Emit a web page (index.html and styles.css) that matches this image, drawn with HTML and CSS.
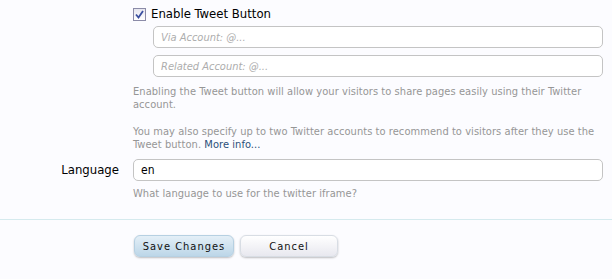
FILE: index.html
```html
<!DOCTYPE html>
<html>
<head>
<meta charset="utf-8">
<link rel="stylesheet" href="styles.css">
</head>
<body>
<form class="form">
  <div class="row">
    <div class="label"></div>
    <div class="ctrl">
      <label class="check"><span class="box"><svg width="9" height="9" viewBox="0 0 9 9"><path d="M1 4.5 L3.5 7.5 L8 1" fill="none" stroke="#3a4fa0" stroke-width="1.8"/></svg></span>Enable Tweet Button</label>
      <div class="sub">
        <input class="text" type="text" placeholder="Via Account: @...">
        <input class="text" type="text" placeholder="Related Account: @...">
      </div>
      <p class="explain first">Enabling the Tweet button will allow your visitors to share pages easily using their Twitter account.</p>
      <p class="explain">You may also specify up to two Twitter accounts to recommend to visitors after they use the Tweet button. <a href="#" class="link">More info...</a></p>
    </div>
  </div>
  <div class="row lang">
    <div class="label"><span class="ltext">Language</span></div>
    <div class="ctrl">
      <input class="text full" type="text" value="en">
      <p class="explain hint">What language to use for the twitter iframe?</p>
    </div>
  </div>
  <div class="sep"></div>
  <div class="buttons">
    <button type="button" class="btn primary">Save Changes</button>
    <button type="button" class="btn">Cancel</button>
  </div>
</form>
</body>
</html>
```
FILE: styles.css
```css
html, body {
  margin: 0;
  padding: 0;
  background: #fcfcff;
}
body {
  font-family: "DejaVu Sans Condensed", "DejaVu Sans", sans-serif;
  font-size: 11px;
  color: #000;
  width: 612px;
  height: 279px;
  overflow: hidden;
}
.form {
  padding-top: 7px;
}
.row {
  display: flex;
}
.label {
  width: 133px;
  flex: none;
  box-sizing: border-box;
  padding-right: 14px;
  text-align: right;
}
.ctrl {
  width: 470px;
}
.check {
  display: flex;
  align-items: center;
  font-size: 13px;
  height: 14px;
  line-height: 14px;
}
.box {
  width: 11px;
  height: 11px;
  border: 1px solid #8b8ba8;
  background: linear-gradient(#e6e6ef, #fff);
  margin-right: 5px;
  display: flex;
  align-items: center;
  justify-content: center;
}
.sub {
  display: flex;
  flex-direction: column;
  gap: 7px;
  margin-top: 5px;
  padding-left: 20px;
}
.text {
  display: block;
  box-sizing: border-box;
  width: 450px;
  height: 22px;
  border: 1px solid #c4c4c4;
  border-radius: 5px;
  background: #fff;
  padding: 0 7px;
  font-family: "DejaVu Sans Condensed", "DejaVu Sans", sans-serif;
  font-size: 11px;
  color: #000;
  outline: none;
}
.text::placeholder {
  color: #adadad;
  font-style: italic;
}
.text.full {
  width: 470px;
  font-size: 12px;
}
.explain {
  margin: 14px 0 0;
  color: #969696;
  line-height: 13px;
  font-size: 11px;
  letter-spacing: 0.06px;
}
.explain.first {
  margin-top: 8px;
}
.link {
  color: #2b4f7a;
  text-decoration: none;
}
.lang {
  margin-top: 8px;
}
.lang .label {
  font-size: 13px;
  line-height: 22px;
}
.hint {
  margin-top: 6px;
}
.sep {
  margin-top: 19px;
  height: 1px;
  background: #d5eaee;
}
.buttons {
  display: flex;
  gap: 6px;
  padding: 15px 0 0 134px;
}
.btn {
  height: 22px;
  width: 98px;
  border: 1px solid #d8dde4;
  border-radius: 6px;
  background: linear-gradient(#ffffff, #e8e8ef);
  box-shadow: 0 1px 2px rgba(0,0,0,0.25);
  font-family: "DejaVu Sans Condensed", "DejaVu Sans", sans-serif;
  font-size: 11px;
  letter-spacing: 1px;
  color: #111;
  padding: 0;
}
.btn.primary {
  width: 100px;
  border-color: #b6d0e2;
  background: linear-gradient(#e4eff7, #bcd6e8);
}
```
